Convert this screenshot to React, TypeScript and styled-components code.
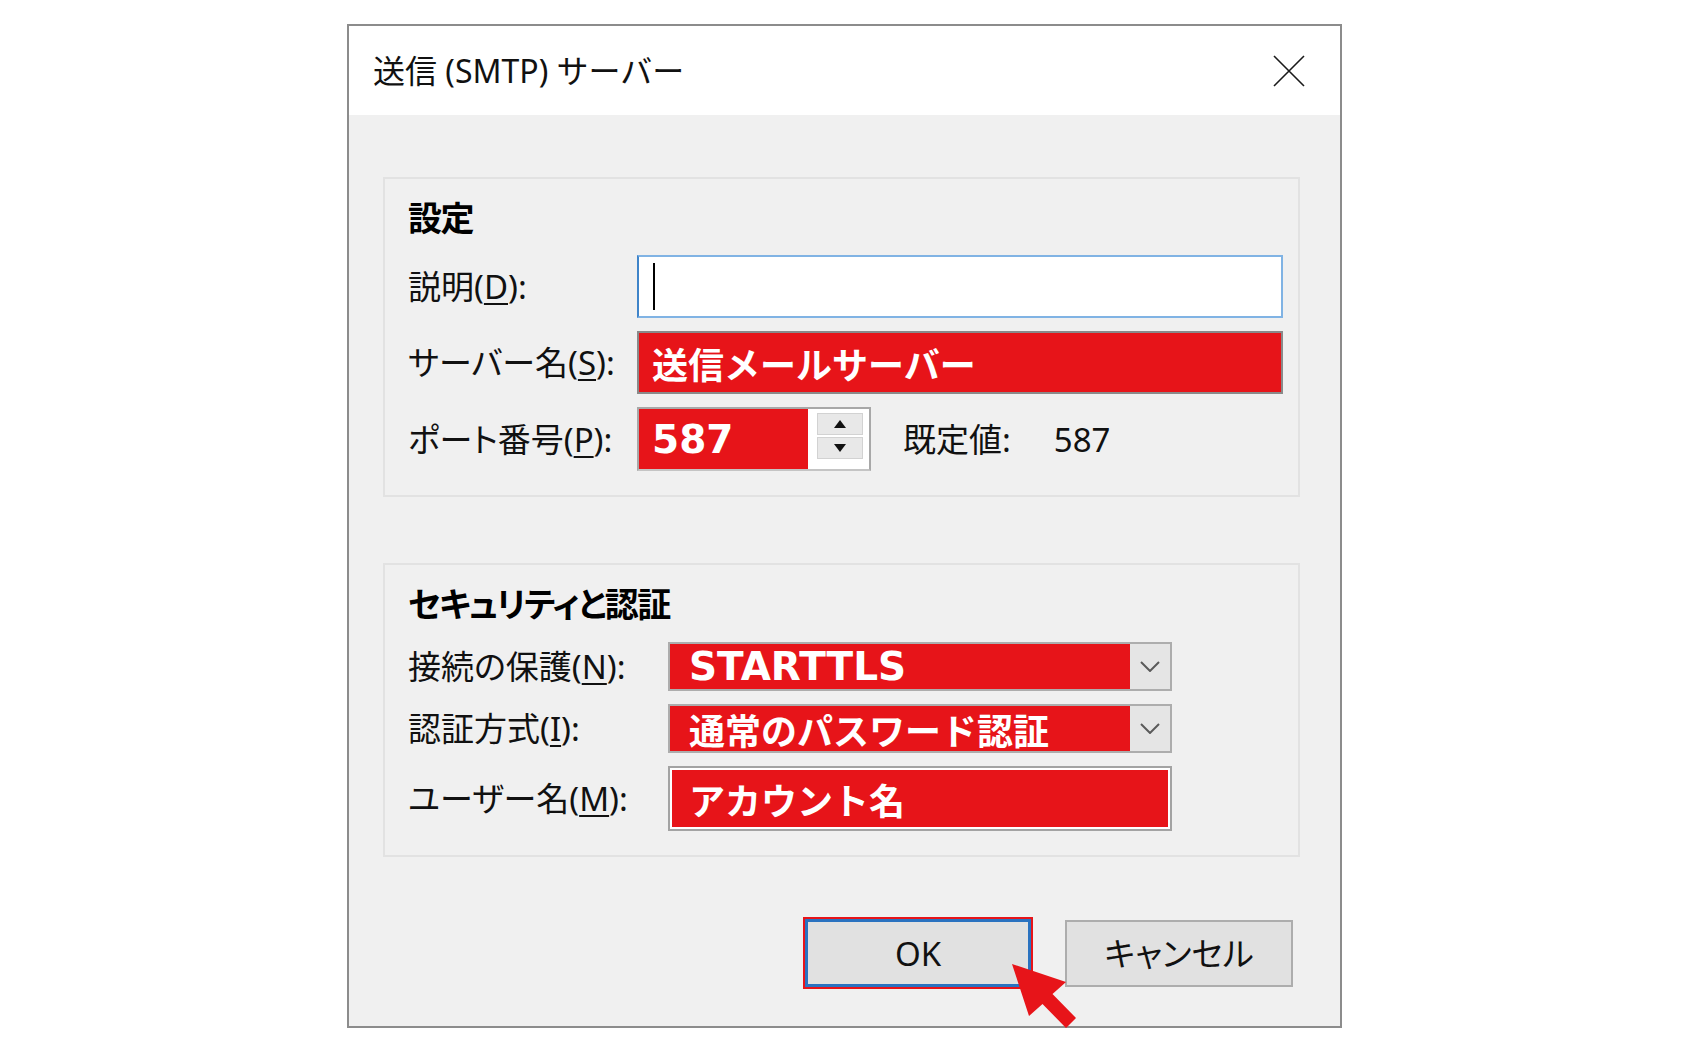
import styled, { createGlobalStyle } from "styled-components";

const RED = "#e71419";

const GlobalStyle = createGlobalStyle`
  html, body {
    margin: 0;
    padding: 0;
    background: #ffffff;
  }
  body {
    font-family: "Noto Sans", "Noto Sans CJK JP", sans-serif;
    color: #000000;
  }
`;

// ページ
const Page = styled.div`
  padding: 21px 0 0 347px;
`;

// 背後のウィンドウの文字 (見切れ)
const BackdropStrip = styled.div`
  width: 690px;
  height: 3px;
  margin-left: 4px;
  overflow: hidden;
  & span {
    display: block;
    margin-top: -35px;
    font-size: 33px;
    line-height: 40px;
    white-space: nowrap;
    color: #2a2a2a;
  }
`;

// ダイアログ
const Dialog = styled.div`
  position: relative;
  box-sizing: border-box;
  width: 995px;
  border: 2px solid #8c8c8c;
  background: #f0f0f0;
`;

const TitleBar = styled.div`
  height: 89px;
  background: #ffffff;
  display: flex;
  align-items: center;
  justify-content: space-between;
  padding: 0 35px 0 24px;
`;

const Title = styled.div`
  font-size: 32px;
  line-height: 1;
  color: #111;
`;

const Body = styled.div`
  padding: 62px 40px 39px 34px;
  display: flex;
  flex-direction: column;
`;

// グループボックス
const Group = styled.div<{ gapAfter?: number }>`
  border: 2px solid #e2e2e2;
  padding: 19px 15px 24px 23px;
  margin-bottom: ${(p) => p.gapAfter ?? 0}px;
  display: flex;
  flex-direction: column;
`;

const GroupTitle = styled.div<{ space: number }>`
  height: 40px;
  line-height: 40px;
  font-size: 34px;
  font-weight: 700;
  font-feature-settings: "palt";
  letter-spacing: -1.5px;
  margin-bottom: ${(p) => p.space}px;
  white-space: nowrap;
`;

const FormGrid = styled.div<{ labelWidth: number }>`
  display: grid;
  grid-template-columns: ${(p) => p.labelWidth}px 1fr;
  row-gap: 13px;
  align-items: center;
`;

const Label = styled.div`
  font-size: 33px;
  line-height: 1;
  font-feature-settings: "palt";
  white-space: nowrap;
  color: #111;
  & u {
    text-underline-offset: 4px;
    text-decoration-thickness: 2px;
  }
`;

// テキストボックス (フォーカス中)
const TextInput = styled.div`
  box-sizing: border-box;
  height: 63px;
  border: 2px solid #80b3e4;
  border-left-color: #3f84c9;
  background: #ffffff;
  display: flex;
  align-items: center;
  padding-left: 14px;
`;

const Caret = styled.div`
  width: 2px;
  height: 47px;
  background: #000;
`;

// 赤塗りの値
const RedText = styled.span<{ latin?: boolean }>`
  color: #ffffff;
  font-weight: 700;
  white-space: nowrap;
  font-family: ${(p) =>
    p.latin ? `"DejaVu Sans", sans-serif` : `"Noto Sans CJK JP", sans-serif`};
  font-size: ${(p) => (p.latin ? 39 : 36)}px;
  line-height: 1;
`;

const RedField = styled.div`
  box-sizing: border-box;
  height: 63px;
  border: 2px solid #8a8a8a;
  background: ${RED};
  display: flex;
  align-items: center;
  padding-left: 13px;
`;

// ポート番号
const PortRow = styled.div`
  display: flex;
  align-items: center;
`;

const PortBox = styled.div`
  box-sizing: border-box;
  width: 234px;
  height: 64px;
  border: 2px solid #a8a8a8;
  border-bottom-color: #c4c4c4;
  background: #ffffff;
  display: flex;
`;

const PortValue = styled.div`
  width: 169px;
  background: ${RED};
  display: flex;
  align-items: center;
  padding-left: 13px;
  box-sizing: border-box;
`;

const Spinner = styled.div`
  margin: 4px 0 0 9px;
  width: 46px;
  display: flex;
  flex-direction: column;
  gap: 2px;
`;

const SpinButton = styled.div`
  box-sizing: border-box;
  height: 22px;
  border: 1px solid #d2d2d2;
  background: #e8e8e8;
  display: flex;
  align-items: center;
  justify-content: center;
`;

const PlainText = styled.span<{ left: number }>`
  margin-left: ${(p) => p.left}px;
  font-size: 33px;
  line-height: 1;
  color: #111;
  white-space: nowrap;
`;

// コンボボックス
const Combo = styled.div`
  box-sizing: border-box;
  width: 504px;
  height: 49px;
  border: 2px solid #adadad;
  background: #e5e5e5;
  display: flex;
`;

const ComboValue = styled.div`
  flex: 1;
  background: ${RED};
  display: flex;
  align-items: center;
  padding-left: 19px;
`;

const ComboArrow = styled.div`
  width: 40px;
  display: flex;
  align-items: center;
  justify-content: center;
`;

const UserField = styled.div`
  box-sizing: border-box;
  width: 504px;
  height: 65px;
  border: 2px solid #a3a3a3;
  padding: 2px;
  background: #ffffff;
  display: flex;
`;

const UserValue = styled.div`
  flex: 1;
  background: ${RED};
  display: flex;
  align-items: center;
  padding-left: 17px;
`;

// ボタン
const ButtonRow = styled.div`
  margin-top: 62px;
  padding-right: 7px;
  display: flex;
  justify-content: flex-end;
  align-items: flex-start;
  gap: 34px;
`;

const DialogButton = styled.div<{ primary?: boolean }>`
  box-sizing: border-box;
  width: ${(p) => (p.primary ? 226 : 228)}px;
  height: ${(p) => (p.primary ? 68 : 67)}px;
  margin-top: ${(p) => (p.primary ? 0 : 1)}px;
  border: ${(p) => (p.primary ? "3px solid #2a72c0" : "2px solid #adadad")};
  box-shadow: ${(p) => (p.primary ? `0 0 0 2px ${RED}` : "none")};
  background: #e1e1e1;
  display: flex;
  align-items: center;
  justify-content: center;
  font-size: 33px;
  line-height: 1;
  font-feature-settings: "palt";
  color: #111;
`;

// 注釈の矢印
const Pointer = styled.svg`
  position: absolute;
  left: 656px;
  top: 934px;
  width: 80px;
  height: 72px;
`;

const CloseIcon = () => (
  <svg width="32" height="32" viewBox="0 0 32 32">
    <path d="M1 1 L31 31 M31 1 L1 31" stroke="#1a1a1a" strokeWidth="1.6" fill="none" />
  </svg>
);

const Chevron = () => (
  <svg width="20" height="11" viewBox="0 0 20 11">
    <polyline points="1,1 10,10 19,1" stroke="#5a5a5a" strokeWidth="2" fill="none" />
  </svg>
);

const Triangle = (props: { up: boolean }) => (
  <svg width="12" height="8" viewBox="0 0 12 8">
    <polygon points={props.up ? "6,0 12,8 0,8" : "0,0 12,0 6,8"} fill="#111" />
  </svg>
);

const App = () => {
  return (
    <>
      <GlobalStyle />
      <Page>
        <BackdropStrip>
          <span>受信メールサーバーと送信メールサーバーの設定を確認します</span>
        </BackdropStrip>
        <Dialog>
          <TitleBar>
            <Title>送信 (SMTP) サーバー</Title>
            <CloseIcon />
          </TitleBar>
          <Body>
            <Group gapAfter={66}>
              <GroupTitle space={17}>設定</GroupTitle>
              <FormGrid labelWidth={229}>
                <Label>
                  説明(<u>D</u>):
                </Label>
                <TextInput>
                  <Caret />
                </TextInput>
                <Label>
                  サーバー名(<u>S</u>):
                </Label>
                <RedField>
                  <RedText>送信メールサーバー</RedText>
                </RedField>
                <Label>
                  ポート番号(<u>P</u>):
                </Label>
                <PortRow>
                  <PortBox>
                    <PortValue>
                      <RedText latin>587</RedText>
                    </PortValue>
                    <Spinner>
                      <SpinButton>
                        <Triangle up />
                      </SpinButton>
                      <SpinButton>
                        <Triangle up={false} />
                      </SpinButton>
                    </Spinner>
                  </PortBox>
                  <PlainText left={32}>既定値:</PlainText>
                  <PlainText left={43}>587</PlainText>
                </PortRow>
              </FormGrid>
            </Group>

            <Group>
              <GroupTitle space={18}>セキュリティと認証</GroupTitle>
              <FormGrid labelWidth={260}>
                <Label>
                  接続の保護(<u>N</u>):
                </Label>
                <Combo>
                  <ComboValue>
                    <RedText latin>STARTTLS</RedText>
                  </ComboValue>
                  <ComboArrow>
                    <Chevron />
                  </ComboArrow>
                </Combo>
                <Label>
                  認証方式(<u>I</u>):
                </Label>
                <Combo>
                  <ComboValue>
                    <RedText>通常のパスワード認証</RedText>
                  </ComboValue>
                  <ComboArrow>
                    <Chevron />
                  </ComboArrow>
                </Combo>
                <Label>
                  ユーザー名(<u>M</u>):
                </Label>
                <UserField>
                  <UserValue>
                    <RedText>アカウント名</RedText>
                  </UserValue>
                </UserField>
              </FormGrid>
            </Group>

            <ButtonRow>
              <DialogButton primary>OK</DialogButton>
              <DialogButton>キャンセル</DialogButton>
            </ButtonRow>
          </Body>
          <Pointer viewBox="0 0 80 72">
            <polygon
              points="7,4 61,22 47.5,34 71,58 61,68 37.5,44 24,56"
              fill={RED}
            />
          </Pointer>
        </Dialog>
      </Page>
    </>
  );
};

export default App;
